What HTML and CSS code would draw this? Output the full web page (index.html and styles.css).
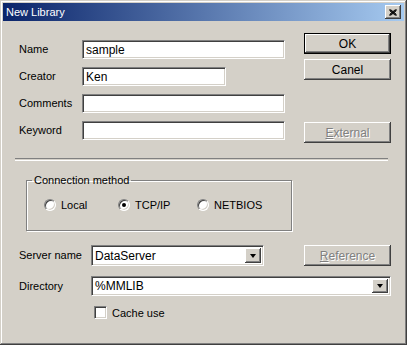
FILE: index.html
```html
<!DOCTYPE html>
<html lang="en">
<head>
    <meta charset="UTF-8">
    <title>New Library</title>
    <link rel="stylesheet" href="styles.css">
</head>
<body>
    <div class="window">
        <div class="titlebar">
            <span class="title">New Library</span>
            <span class="close">
                <svg width="8" height="7" viewBox="0 0 8 7">
                    <path d="M0.5 0.5 L7.5 6.5 M1.5 0.5 L7.5 5.5 M0.5 1.5 L6.5 6.5 M7.5 0.5 L0.5 6.5 M6.5 0.5 L0.5 5.5 M7.5 1.5 L1.5 6.5" stroke="#000" stroke-width="1" fill="none"/>
                </svg>
            </span>
        </div>
        <div class="content">
            <div class="top">
                <div class="fields">
                    <span class="label">Name</span>
                    <div class="edit wide">sample</div>
                    <span class="label">Creator</span>
                    <div class="edit short">Ken</div>
                    <span class="label">Comments</span>
                    <div class="edit wide"></div>
                    <span class="label">Keyword</span>
                    <div class="edit wide"></div>
                </div>
                <div class="buttons">
                    <div class="btn default">OK</div>
                    <div class="btn">Canel</div>
                    <div class="btn disabled external"><u>E</u>xternal</div>
                </div>
            </div>

            <div class="separator"></div>

            <fieldset class="group">
                <legend>Connection method</legend>
                <div class="radios">
                    <div class="option"><span class="radio"></span>Local</div>
                    <div class="option"><span class="radio checked"></span>TCP/IP</div>
                    <div class="option"><span class="radio"></span>NETBIOS</div>
                </div>
            </fieldset>

            <div class="server">
                <span class="label">Server name</span>
                <div class="combo server-combo">
                    <span class="combo-text">DataServer</span>
                    <span class="arrow"></span>
                </div>
                <div class="btn disabled reference"><u>R</u>eference</div>

                <span class="label">Directory</span>
                <div class="combo dir-combo">
                    <span class="combo-text">%MMLIB</span>
                    <span class="arrow"></span>
                </div>

                <div class="cache">
                    <span class="checkbox"></span>Cache use
                </div>
            </div>
        </div>
    </div>
</body>
</html>
```

FILE: styles.css
```css
body {
    margin: 0;
    padding: 0;
    font-family: "Liberation Sans", Arial, sans-serif;
    font-size: 11px;
    color: #000;
    background: #d4d0c8;
}

.window {
    width: 407px;
    height: 345px;
    box-sizing: border-box;
    padding: 3px;
    background: #d4d0c8;
    box-shadow: inset -1px -1px #404040, inset 1px 1px #d4d0c8, inset -2px -2px #808080, inset 2px 2px #fff;
}

.titlebar {
    height: 18px;
    display: flex;
    align-items: center;
    justify-content: space-between;
    padding: 0 3px 0 3px;
    background: linear-gradient(to right, #0a246a, #a6caf0);
}

.title {
    color: #fff;
    font-size: 11px;
}

.close {
    width: 16px;
    height: 14px;
    box-sizing: border-box;
    display: flex;
    align-items: center;
    justify-content: center;
    background: #d4d0c8;
    box-shadow: inset -1px -1px #404040, inset 1px 1px #fff, inset -2px -2px #808080;
}

.content {
    padding: 12px 13px 0 16px;
}

.top {
    display: flex;
    justify-content: space-between;
}

.fields {
    display: grid;
    grid-template-columns: 63px auto;
    grid-auto-rows: 19px;
    row-gap: 8px;
    padding-top: 7px;
    align-items: center;
}

.label {
    line-height: 13px;
    font-size: 11px;
}

.edit {
    height: 19px;
    box-sizing: border-box;
    padding: 2px 0 0 3px;
    line-height: 14px;
    font-size: 12px;
    background: #fff;
    border: 1px solid;
    border-color: #808080 #fff #fff #808080;
    box-shadow: inset 1px 1px #404040, inset -1px -1px #d4d0c8;
}

.wide {
    width: 203px;
}

.short {
    width: 144px;
}

.buttons {
    display: flex;
    flex-direction: column;
    gap: 5px;
    width: 87px;
}

.btn {
    height: 21px;
    box-sizing: border-box;
    display: flex;
    align-items: center;
    justify-content: center;
    font-size: 12px;
    background: #d4d0c8;
    box-shadow: inset -1px -1px #404040, inset 1px 1px #fff, inset -2px -2px #808080;
}

.btn.default {
    border: 1px solid #000;
}

.btn.disabled {
    color: #808080;
    text-shadow: 1px 1px #fff;
}

.external {
    margin-top: 37px;
}

.separator {
    height: 1px;
    margin: 15px 3px 0 -4px;
    border-top: 1px solid #808080;
    border-bottom: 1px solid #fff;
}

.group {
    width: 266px;
    box-sizing: border-box;
    margin: 13px 0 0 7px;
    padding: 11px 0 19px 17px;
    border: 1px solid #808080;
    box-shadow: 1px 1px 0 #fff, inset 1px 1px 0 #fff;
}

.group legend {
    padding: 0 2px;
    margin-left: -12px;
    line-height: 13px;
    font-size: 11px;
}

.radios {
    display: grid;
    grid-template-columns: 74px 79px auto;
    font-size: 11px;
}

.option {
    display: flex;
    align-items: center;
    gap: 5px;
    height: 13px;
}

.radio {
    width: 12px;
    height: 12px;
    box-sizing: border-box;
    border-radius: 50%;
    background: #fff;
    border: 1px solid;
    border-color: #808080 #fff #fff #808080;
    box-shadow: inset 1px 1px #404040, inset -1px -1px #d4d0c8;
    display: flex;
    align-items: center;
    justify-content: center;
}

.radio.checked::after {
    content: "";
    width: 4px;
    height: 4px;
    border-radius: 50%;
    background: #000;
}

.server {
    display: grid;
    grid-template-columns: 72px 173px 1fr 87px;
    grid-template-rows: 21px 20px 13px;
    row-gap: 10px;
    margin-top: 14px;
    align-items: center;
    font-size: 12px;
}

.combo {
    height: 21px;
    box-sizing: border-box;
    display: flex;
    align-items: center;
    background: #fff;
    border: 1px solid;
    border-color: #808080 #fff #fff #808080;
    box-shadow: inset 1px 1px #404040, inset -1px -1px #d4d0c8;
    padding: 2px;
}

.combo-text {
    flex: 1;
    padding-left: 1px;
}

.server-combo {
    grid-column: 2;
}

.reference {
    grid-column: 4;
}

.dir-combo {
    grid-column: 2 / 5;
    height: 20px;
}

.arrow {
    width: 16px;
    height: 15px;
    box-sizing: border-box;
    display: flex;
    align-items: center;
    justify-content: center;
    background: #d4d0c8;
    box-shadow: inset -1px -1px #404040, inset 1px 1px #fff, inset -2px -2px #808080;
}

.dir-combo .arrow {
    height: 14px;
}

.arrow::after {
    content: "";
    border-left: 3.5px solid transparent;
    border-right: 3.5px solid transparent;
    border-top: 4px solid #000;
}

.cache {
    grid-column: 2 / 5;
    display: flex;
    align-items: center;
    gap: 5px;
    padding-left: 3px;
    height: 13px;
    font-size: 11px;
}

.checkbox {
    width: 13px;
    height: 13px;
    box-sizing: border-box;
    background: #fff;
    border: 1px solid;
    border-color: #808080 #fff #fff #808080;
    box-shadow: inset 1px 1px #404040, inset -1px -1px #d4d0c8;
}
```
